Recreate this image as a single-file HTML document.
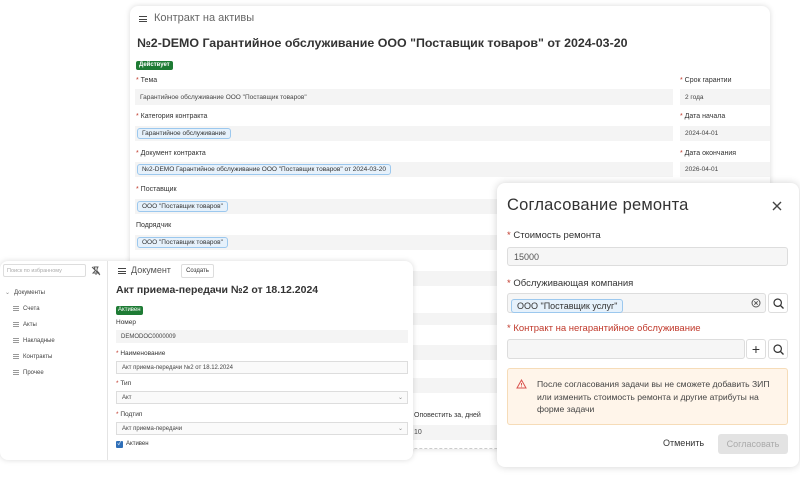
<!DOCTYPE html>
<html><head><meta charset="utf-8"><style>
*{box-sizing:border-box;margin:0;padding:0}
body{width:800px;height:483px;background:#fff;position:relative;overflow:hidden;font-family:"Liberation Sans","Noto Sans CJK SC",sans-serif;color:#333}
.abs{position:absolute}
.win{position:absolute;background:#fff;border-radius:8px;box-shadow:0 0 6px rgba(0,0,0,.15)}
.lbl{position:absolute;font-size:7px;color:#333}
.lbl b{color:#c0392b;font-weight:normal}
.fld{position:absolute;background:#f4f4f4;font-size:6.5px;color:#444;padding-left:5px;display:flex;align-items:center}
.chip{background:#e6f1fb;border:1px solid #9cc8ee;border-radius:3px;padding:1px 4px;font-size:6.5px;color:#333}
.stripe{position:absolute;left:130px;width:640px;background:#f4f4f4}
.ham{position:absolute;width:8px;height:6px;border-top:1.3px solid #444;border-bottom:1.3px solid #444}
.ham:after{content:"";position:absolute;left:0;right:0;top:1.6px;border-top:1.3px solid #444}
.tree{position:absolute;font-size:6px;color:#444}
.ic{display:inline-block;width:6px;height:5px;border-top:1px solid #999;border-bottom:1px solid #999;position:relative;margin-right:4px;vertical-align:middle}
.ic:after{content:"";position:absolute;left:0;right:0;top:1px;border-top:1px solid #999}
.dlbl{position:absolute;font-size:9.5px;color:#333}
.dlbl b{color:#c0392b;font-weight:normal}
.inp{position:absolute;border:1px solid #ddd;border-radius:3px;background:#f6f6f6}
.btn{position:absolute;border:1px solid #ddd;border-radius:3px;background:#fff;display:flex;align-items:center;justify-content:center}
</style></head><body>

<div class="win" style="left:130px;top:6px;width:640px;height:443px;border-bottom:1px dashed #ccc"></div>
<div class="ham" style="left:139px;top:16px"></div>
<div class="abs" style="left:154px;top:12px;font-size:11px;color:#666">Контракт на активы</div>
<div class="abs" style="left:137px;top:36px;font-size:12.4px;font-weight:bold;color:#333">№2-DEMO Гарантийное обслуживание ООО "Поставщик товаров" от 2024-03-20</div>
<div class="abs" style="left:136px;top:61px;height:9px;padding:0 3px;background:#1e7b34;color:#fff;font-size:6px;font-weight:bold;border-radius:2px;line-height:9px">Действует</div>

<div class="lbl" style="left:136px;top:77px"><b>*</b> Тема</div>
<div class="fld" style="left:135px;top:89px;width:538px;height:16px">Гарантийное обслуживание ООО "Поставщик товаров"</div>
<div class="lbl" style="left:136px;top:113px"><b>*</b> Категория контракта</div>
<div class="fld" style="left:135px;top:126px;width:538px;height:15px;padding-left:2px"><span class="chip">Гарантийное обслуживание</span></div>
<div class="lbl" style="left:136px;top:150px"><b>*</b> Документ контракта</div>
<div class="fld" style="left:135px;top:162px;width:538px;height:15px;padding-left:2px"><span class="chip">№2-DEMO Гарантийное обслуживание ООО "Поставщик товаров" от 2024-03-20</span></div>
<div class="lbl" style="left:136px;top:186px"><b>*</b> Поставщик</div>
<div class="fld" style="left:135px;top:199px;width:538px;height:15px;padding-left:2px"><span class="chip">ООО "Поставщик товаров"</span></div>
<div class="lbl" style="left:136px;top:222px">Подрядчик</div>
<div class="fld" style="left:135px;top:235px;width:538px;height:15px;padding-left:2px"><span class="chip">ООО "Поставщик товаров"</span></div>

<div class="lbl" style="left:680px;top:77px"><b>*</b> Срок гарантии</div>
<div class="fld" style="left:680px;top:89px;width:90px;height:16px">2 года</div>
<div class="lbl" style="left:680px;top:113px"><b>*</b> Дата начала</div>
<div class="fld" style="left:680px;top:126px;width:90px;height:15px">2024-04-01</div>
<div class="lbl" style="left:680px;top:150px"><b>*</b> Дата окончания</div>
<div class="fld" style="left:680px;top:162px;width:90px;height:15px">2026-04-01</div>

<div class="stripe" style="top:271px;height:15px"></div>
<div class="stripe" style="top:313px;height:12px"></div>
<div class="stripe" style="top:345px;height:15px"></div>
<div class="stripe" style="top:378px;height:15px"></div>
<div class="stripe" style="top:425px;height:15px"></div>
<div class="abs" style="left:414px;top:412px;font-size:7px;color:#333">Оповестить за, дней</div>
<div class="abs" style="left:414px;top:429px;font-size:7px;color:#444">10</div>

<div class="win" style="left:0;top:261px;width:413px;height:199px;overflow:hidden">
  <div class="abs" style="left:0;top:0;width:108px;height:199px;border-right:1px solid #e4e4e4"></div>
</div>
<div class="abs" style="left:3px;top:264px;width:83px;height:13px;border:1px solid #ddd;border-radius:2px;font-size:5.5px;color:#aaa;padding:3px 3px">Поиск по избранному</div>
<svg class="abs" style="left:91px;top:266px" width="10" height="10" viewBox="0 0 10 10"><path d="M3 1h4l-1 2v2l2 2H2l2-2V3z M5 7v2 M1 1l8 8" stroke="#555" stroke-width=".9" fill="none"/></svg>
<div class="tree" style="left:5px;top:289px"><span style="color:#888;margin-right:4px">⌄</span>Документы</div>
<div class="tree" style="left:13px;top:306px"><span class="ic"></span>Счета</div>
<div class="tree" style="left:13px;top:322px"><span class="ic"></span>Акты</div>
<div class="tree" style="left:13px;top:338px"><span class="ic"></span>Накладные</div>
<div class="tree" style="left:13px;top:354px"><span class="ic"></span>Контракты</div>
<div class="tree" style="left:13px;top:370px"><span class="ic"></span>Прочее</div>

<div class="ham" style="left:118px;top:268px"></div>
<div class="abs" style="left:131px;top:265px;font-size:9px;color:#555">Документ</div>
<div class="abs" style="left:181px;top:264px;width:33px;height:14px;border:1px solid #ddd;border-radius:2px;font-size:6px;color:#333;text-align:center;line-height:12px">Создать</div>
<div class="abs" style="left:116px;top:284px;font-size:10.5px;font-weight:bold;color:#333">Акт приема-передачи №2 от 18.12.2024</div>
<div class="abs" style="left:116px;top:306px;height:9px;padding:0 2px;background:#1e7b34;color:#fff;font-size:6px;border-radius:2px;line-height:9px">Активен</div>
<div class="lbl" style="left:116px;top:319px;font-size:6.5px">Номер</div>
<div class="fld" style="left:116px;top:330px;width:292px;height:13px;font-size:6px">DEMODOC0000009</div>
<div class="lbl" style="left:116px;top:350px;font-size:6.5px"><b>*</b> Наименование</div>
<div class="fld" style="left:116px;top:361px;width:292px;height:13px;background:#fafafa;border:1px solid #ddd;font-size:6px">Акт приема-передачи №2 от 18.12.2024</div>
<div class="lbl" style="left:116px;top:380px;font-size:6.5px"><b>*</b> Тип</div>
<div class="fld" style="left:116px;top:391px;width:292px;height:13px;background:#fafafa;border:1px solid #ddd;font-size:6px">Акт<span style="margin-left:auto;margin-right:4px;color:#888">⌄</span></div>
<div class="lbl" style="left:116px;top:411px;font-size:6.5px"><b>*</b> Подтип</div>
<div class="fld" style="left:116px;top:422px;width:292px;height:13px;background:#fafafa;border:1px solid #ddd;font-size:6px">Акт приема-передачи<span style="margin-left:auto;margin-right:4px;color:#888">⌄</span></div>
<div class="abs" style="left:116px;top:441px;width:7px;height:7px;background:#2f6fb8;border-radius:1px;color:#fff;font-size:6px;line-height:7px;text-align:center">✓</div>
<div class="abs" style="left:126px;top:441px;font-size:6px;color:#333">Активен</div>

<div class="win" style="left:497px;top:183px;width:302px;height:284px;box-shadow:0 0 8px rgba(0,0,0,.18)"></div>
<div class="abs" style="left:507px;top:196px;font-size:16.5px;color:#333;letter-spacing:.2px">Согласование ремонта</div>
<svg class="abs" style="left:772px;top:201px" width="10" height="10"><path d="M1 1l8 8M9 1l-8 8" stroke="#444" stroke-width="1.4"/></svg>
<div class="dlbl" style="left:507px;top:230px"><b>*</b> Стоимость ремонта</div>
<div class="inp" style="left:507px;top:247px;width:281px;height:19px;font-size:9px;color:#555;padding:4px 6px">15000</div>
<div class="dlbl" style="left:507px;top:278px"><b>*</b> Обслуживающая компания</div>
<div class="inp" style="left:507px;top:293px;width:259px;height:20px;padding:2px 3px"><span class="chip" style="font-size:9px;padding:1px 5px;display:inline-block">ООО "Поставщик услуг"</span></div>
<svg class="abs" style="left:751px;top:298px" width="10" height="10"><circle cx="5" cy="5" r="4" stroke="#555" fill="none" stroke-width="1"/><path d="M3.3 3.3l3.4 3.4M6.7 3.3l-3.4 3.4" stroke="#555" stroke-width="1"/></svg>
<div class="btn" style="left:768px;top:293px;width:20px;height:20px"><svg width="11" height="11"><circle cx="4.7" cy="4.7" r="3.7" stroke="#333" stroke-width="1.2" fill="none"/><path d="M7.5 7.5l3 3" stroke="#333" stroke-width="1.3"/></svg></div>
<div class="dlbl" style="left:507px;top:323px;color:#c0392b"><b>*</b> Контракт на негарантийное обслуживание</div>
<div class="inp" style="left:507px;top:339px;width:238px;height:20px"></div>
<div class="btn" style="left:746px;top:339px;width:20px;height:20px;font-size:14px;color:#333">+</div>
<div class="btn" style="left:768px;top:339px;width:20px;height:20px"><svg width="11" height="11"><circle cx="4.7" cy="4.7" r="3.7" stroke="#333" stroke-width="1.2" fill="none"/><path d="M7.5 7.5l3 3" stroke="#333" stroke-width="1.3"/></svg></div>
<div class="abs" style="left:507px;top:368px;width:281px;height:57px;background:#fff5ea;border:1px solid #f6dcb8;border-radius:3px"></div>
<svg class="abs" style="left:516px;top:379px" width="11" height="10"><path d="M5.5 1L10 9H1z" stroke="#d9534f" fill="none" stroke-width="1"/><path d="M5.5 4v2.5M5.5 7.5v.6" stroke="#d9534f" stroke-width="1"/></svg>
<div class="abs" style="left:537px;top:378px;width:245px;font-size:8.6px;line-height:12.6px;color:#444">После согласования задачи вы не сможете добавить ЗИП или изменить стоимость ремонта и другие атрибуты на форме задачи</div>
<div class="abs" style="left:663px;top:438px;font-size:9px;color:#333">Отменить</div>
<div class="abs" style="left:718px;top:434px;width:70px;height:20px;background:#e3e3e3;border-radius:3px;font-size:9px;color:#aaa;text-align:center;line-height:20px">Согласовать</div>
</body></html>
